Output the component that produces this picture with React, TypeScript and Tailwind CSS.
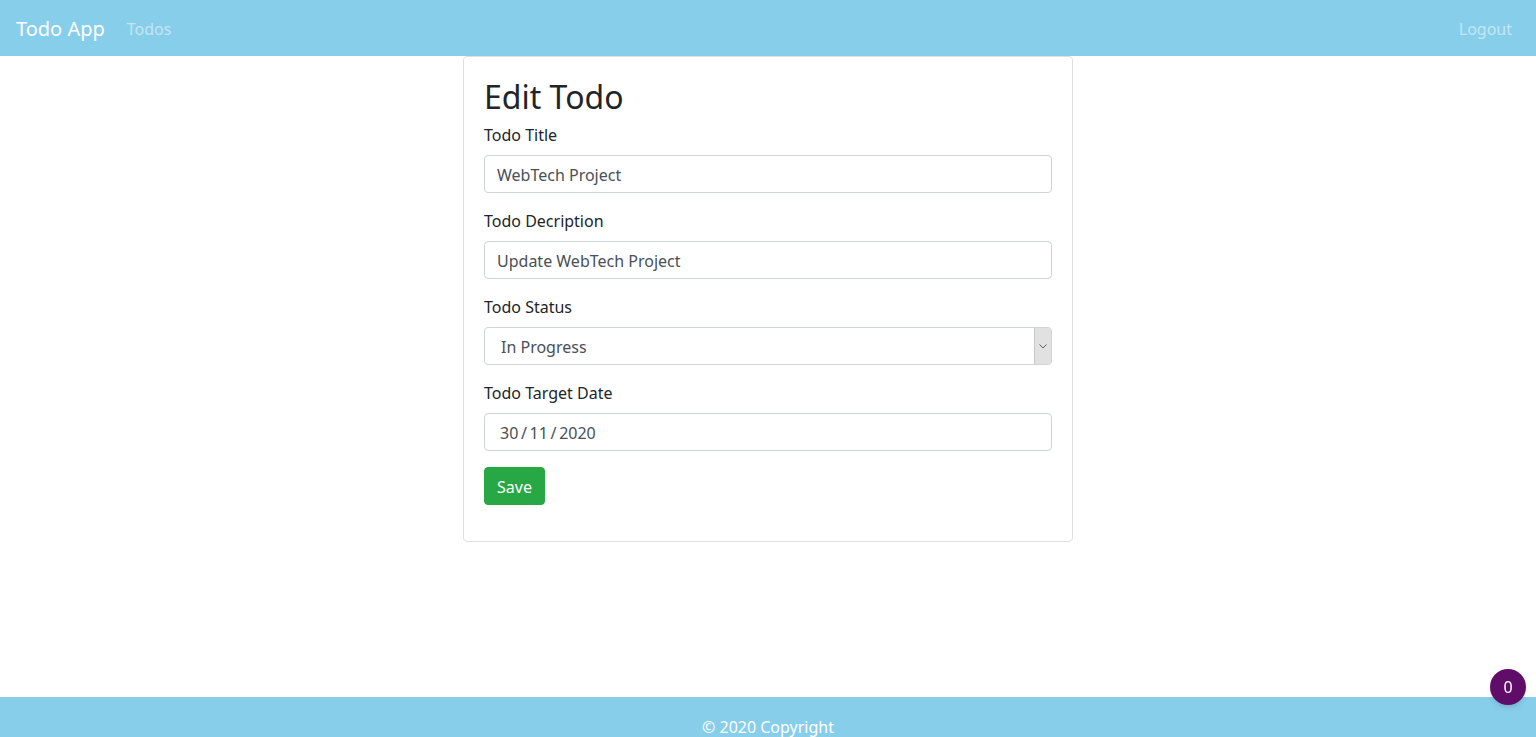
import { useState } from "react";

const font = { fontFamily: '"Segoe UI", "Noto Sans", "Open Sans", sans-serif' };

export default function App() {
  const [title, setTitle] = useState("WebTech Project");
  const [description, setDescription] = useState("Update WebTech Project");
  const [status, setStatus] = useState("In Progress");
  const [date, setDate] = useState("30\u2009/\u200911\u2009/\u20092020");

  const inputClass =
    "block h-[38px] w-full rounded-[4px] border border-[#ced4da] bg-white px-3 pt-px text-base text-[#495057] outline-none focus:border-[#80bdff]";
  const labelClass = "mb-2 block pt-px leading-[23px]";

  return (
    <div className="flex min-h-[737px] flex-col bg-white text-[#212529]" style={font}>
      <header className="flex h-14 items-center justify-between bg-[#87ceeb] px-4 pt-px">
        <div className="flex items-center">
          <a href="#" className="mr-[14px] text-xl leading-[30px] text-white">
            Todo App
          </a>
          <a href="#" className="px-2 text-base text-white/50">
            Todos
          </a>
        </div>
        <a href="#" className="px-2 text-base text-white/50">
          Logout
        </a>
      </header>

      <main className="flex flex-1 justify-center">
        <div className="mb-auto w-[610px] rounded-[4px] border border-[#dfdfdf] p-5">
          <h1 className="mb-2 pt-px text-[32px] leading-[37px] font-normal">Edit Todo</h1>
          <form onSubmit={(event) => event.preventDefault()} className="mb-4">
            <div className="mb-4">
              <label className={labelClass}>Todo Title</label>
              <input value={title} onChange={(e) => setTitle(e.target.value)} className={inputClass} />
            </div>
            <div className="mb-4">
              <label className={labelClass}>Todo Decription</label>
              <input
                value={description}
                onChange={(e) => setDescription(e.target.value)}
                className={inputClass}
              />
            </div>
            <div className="mb-4">
              <label className={labelClass}>Todo Status</label>
              <div className="relative">
                <select
                  value={status}
                  onChange={(e) => setStatus(e.target.value)}
                  className={`${inputClass} appearance-none pl-4`}
                >
                  <option>In Progress</option>
                  <option>Completed</option>
                </select>
                <div className="pointer-events-none absolute top-px right-px bottom-px flex w-[17px] items-center justify-center rounded-r-[3px] border-l border-[#c8c8c8] bg-[#e1e1e1]">
                  <svg width="8" height="5" viewBox="0 0 8 5" fill="none">
                    <path d="M0.5 0.5 L4 4 L7.5 0.5" stroke="#606060" strokeWidth="1" />
                  </svg>
                </div>
              </div>
            </div>
            <div className="mb-4">
              <label className={labelClass}>Todo Target Date</label>
              <input
                value={date}
                onChange={(e) => setDate(e.target.value)}
                className={`${inputClass} pl-[15px]`}
              />
            </div>
            <button
              type="submit"
              className="h-[38px] rounded-[4px] border border-[#28a745] bg-[#28a745] px-3 pt-px text-base text-white hover:bg-[#218838]"
            >
              Save
            </button>
          </form>
        </div>
      </main>

      <footer className="h-10 bg-[#87ceeb] pt-[18px] text-center leading-6 text-white">
        © 2020 Copyright
      </footer>

      <div className="fixed right-[10px] bottom-[32px] flex h-9 w-9 items-center justify-center rounded-full bg-[#5f0d68] text-base text-white shadow-md">
        0
      </div>
    </div>
  );
}
